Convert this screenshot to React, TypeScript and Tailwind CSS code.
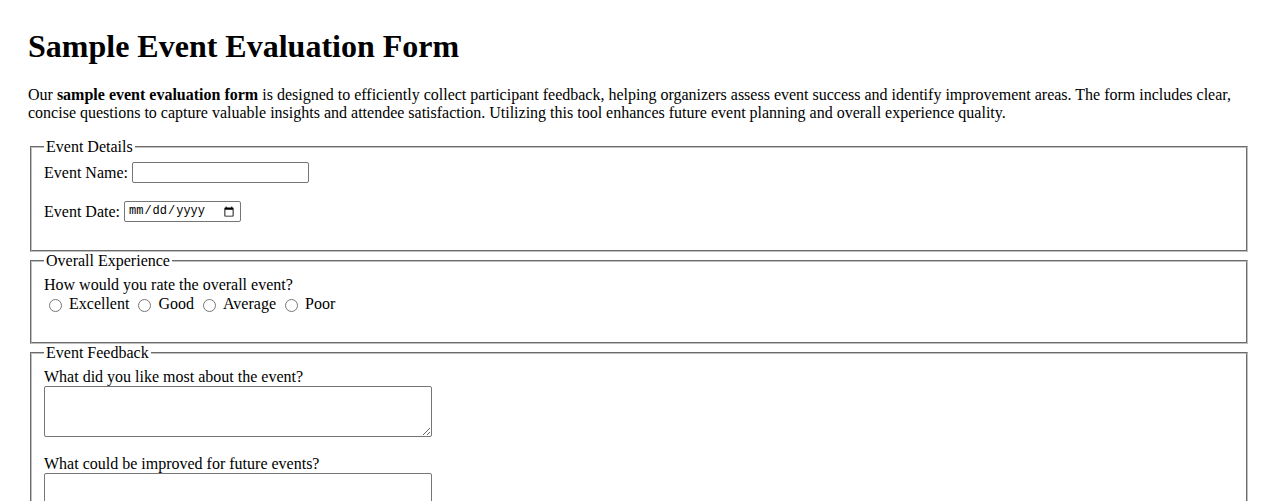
import React from 'react'

const ratings = ['Excellent', 'Good', 'Average', 'Poor']

const fieldsetCls =
  'mx-[2px] border-2 [border-style:groove] border-[#c0c0c0] px-[12px]'

export default function App() {
  return (
    <div className="min-h-screen bg-white px-[28px] pb-10 font-['Liberation_Serif',serif] text-[16px] text-black">
      <h1 className="mt-[29.4px] mb-[21.4px] text-[32px] font-bold leading-[35.4px]">
        Sample Event Evaluation Form
      </h1>
      <p className="mb-[16px] leading-[18px]">
        Our <strong>sample event evaluation form</strong> is designed to efficiently collect participant
        feedback, helping organizers assess event success and identify improvement areas. The form
        includes clear, concise questions to capture valuable insights and attendee satisfaction.
        Utilizing this tool enhances future event planning and overall experience quality.
      </p>

      <form>
        {/* Event details */}
        <fieldset className={`${fieldsetCls} pt-[5.6px] pb-[27px]`}>
          <legend className="px-[2px] leading-[18px]">Event Details</legend>
          <div className="flex h-[22px] items-center">
            <label htmlFor="eventName" className="leading-[18px]">Event Name:</label>
            <input
              id="eventName"
              type="text"
              className="ml-[4px] h-[21px] w-[177px] rounded-[2px] border border-[#767676] px-[2px] font-['Liberation_Sans',sans-serif] text-[13.33px]"
            />
          </div>
          <div className="mt-[17px] flex h-[22px] items-center">
            <label htmlFor="eventDate" className="leading-[18px]">Event Date:</label>
            <input
              id="eventDate"
              type="date"
              className="ml-[4px] h-[21px] w-[117px] rounded-[2px] border border-[#767676] px-[3px] font-['Liberation_Mono',monospace] text-[12px] leading-[17px]"
            />
          </div>
        </fieldset>

        {/* Overall experience */}
        <fieldset className={`${fieldsetCls} pt-[6.6px] pb-[28px]`}>
          <legend className="px-[2px] leading-[18px]">Overall Experience</legend>
          <div className="leading-[18px]">How would you rate the overall event?</div>
          <div className="flex h-[20px] items-center">
            {ratings.map((r) => (
              <label key={r} className="mr-[4px] flex items-center leading-[18px]">
                <input type="radio" name="overall" value={r} className="mt-[2px] ml-[5px] mr-[7px] h-[13px] w-[13px]" />
                {r}
              </label>
            ))}
          </div>
        </fieldset>

        {/* Feedback */}
        <fieldset className={`${fieldsetCls} pt-[5.6px] pb-[28px]`}>
          <legend className="px-[2px] leading-[18px]">Event Feedback</legend>
          <label htmlFor="liked" className="block leading-[18px]">What did you like most about the event?</label>
          <textarea
            id="liked"
            className="block h-[51px] w-[388px] rounded-[2px] border border-[#767676] px-[2px] font-['Liberation_Mono',monospace] text-[13px]"
          />
          <label htmlFor="improve" className="mt-[18px] block leading-[18px]">
            What could be improved for future events?
          </label>
          <textarea
            id="improve"
            className="block h-[51px] w-[388px] rounded-[2px] border border-[#767676] px-[2px] font-['Liberation_Mono',monospace] text-[13px]"
          />
        </fieldset>
      </form>
    </div>
  )
}
